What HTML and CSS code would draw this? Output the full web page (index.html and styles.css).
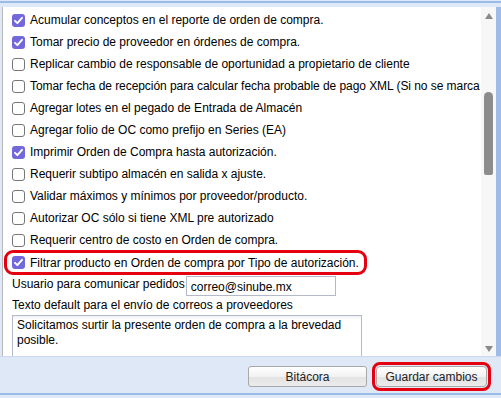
FILE: index.html
```html
<!DOCTYPE html>
<html lang="es">
<head>
<meta charset="utf-8">
<link rel="stylesheet" href="styles.css">
</head>
<body>
<div class="app">
  <div class="top"></div>
  <div class="main">
    <div class="panel">
      <div class="row"><span class="cb on"></span><span class="lbl">Acumular conceptos en el reporte de orden de compra.</span></div>
      <div class="row"><span class="cb on"></span><span class="lbl">Tomar precio de proveedor en órdenes de compra.</span></div>
      <div class="row"><span class="cb"></span><span class="lbl">Replicar cambio de responsable de oportunidad a propietario de cliente</span></div>
      <div class="row"><span class="cb"></span><span class="lbl tight">Tomar fecha de recepción para calcular fecha probable de pago XML (Si no se marca</span></div>
      <div class="row"><span class="cb"></span><span class="lbl">Agregar lotes en el pegado de Entrada de Almacén</span></div>
      <div class="row"><span class="cb"></span><span class="lbl">Agregar folio de OC como prefijo en Series (EA)</span></div>
      <div class="row"><span class="cb on"></span><span class="lbl">Imprimir Orden de Compra hasta autorización.</span></div>
      <div class="row"><span class="cb"></span><span class="lbl">Requerir subtipo almacén en salida x ajuste.</span></div>
      <div class="row"><span class="cb"></span><span class="lbl">Validar máximos y mínimos por proveedor/producto.</span></div>
      <div class="row"><span class="cb"></span><span class="lbl">Autorizar OC sólo si tiene XML pre autorizado</span></div>
      <div class="row"><span class="cb"></span><span class="lbl">Requerir centro de costo en Orden de compra.</span></div>
      <div class="row hl"><span class="cb on"></span><span class="lbl">Filtrar producto en Orden de compra por Tipo de autorización.</span></div>
      <div class="field">
        <span class="flabel">Usuario para comunicar pedidos</span>
        <span class="input">correo@sinube.mx</span>
      </div>
      <div class="tlabel">Texto default para el envío de correos a proveedores</div>
      <div class="textarea">Solicitamos surtir la presente orden de compra a la brevedad posible.</div>
    </div>
    <div class="scroll">
      <span class="arrow up"></span>
      <span class="thumb"></span>
      <span class="arrow down"></span>
    </div>
    <div class="edge"></div>
  </div>
  <div class="footer">
    <button class="btn">Bitácora</button>
    <button class="btn save">Guardar cambios</button>
  </div>
</div>
</body>
</html>
```

FILE: styles.css
```css
* { box-sizing: border-box; }
html, body { margin: 0; padding: 0; }
body {
  width: 501px;
  height: 398px;
  overflow: hidden;
  background: #dfe8f6;
  font-family: "Liberation Sans", Arial, sans-serif;
  font-size: 12px;
  color: #000;
}
.app { display: flex; flex-direction: column; height: 398px; }
.top {
  height: 7px;
  flex: none;
  background: linear-gradient(#dfe8f6 0 1px, #99bbe8 1px 3px, #dfe8f6 3px);
}
.main { display: flex; height: 349px; flex: none; }
.panel {
  margin-left: 2px;
  width: 479px;
  background: #fff;
  border-left: 1px solid #b8b8b8;
  overflow: hidden;
  padding-top: 2px;
}
.row {
  display: flex;
  align-items: center;
  height: 22px;
  padding-left: 9px;
  white-space: nowrap;
}
.lbl { margin-left: 5px; font-size: 12px; }
.lbl.tight { letter-spacing: -0.06px; }
.cb {
  flex: none;
  width: 13px;
  height: 13px;
  border: 1px solid #767676;
  border-radius: 3px;
  background: #fff;
}
.cb.on {
  border: none;
  background: #7268d9 url("data:image/svg+xml;utf8,<svg xmlns='http://www.w3.org/2000/svg' width='13' height='13' viewBox='0 0 13 13'><path d='M3 6.8 L5.4 9.2 L10 3.8' fill='none' stroke='white' stroke-width='1.9' stroke-linecap='round' stroke-linejoin='round'/></svg>") no-repeat center;
}
.row.hl {
  width: fit-content;
  height: 19px;
  margin: 2px 0 1px 4px;
  padding: 0 5px 0 5px;
  outline: 3px solid #e4000f;
  border-radius: 6px;
}
.field {
  display: flex;
  align-items: center;
  margin-top: 4px;
  padding-left: 9px;
  height: 20px;
}
.flabel { font-size: 12px; margin-top: -5px; }
.input {
  margin-left: 1px;
  width: 150px;
  height: 20px;
  border: 1px solid #b5b8c8;
  padding: 3px 4px 0;
  font-size: 12px;
}
.tlabel { padding-left: 9px; margin-top: 1px; height: 18px; line-height: 17px; font-size: 12px; }
.textarea {
  margin-left: 9px;
  width: 350px;
  height: 60px;
  border: 1px solid #b5b8c8;
  background: linear-gradient(#eef0f4, #fff 4px);
  padding: 2px 4px;
  line-height: 15px;
  font-size: 12px;
}
.scroll {
  width: 15px;
  flex: none;
  background: #f7f7f7;
  display: flex;
  flex-direction: column;
  align-items: center;
  padding-top: 6px;
}
.arrow {
  width: 0; height: 0;
  border-left: 4.5px solid transparent;
  border-right: 4.5px solid transparent;
}
.arrow.up { border-bottom: 6px solid #8a8a8a; }
.arrow.down { border-top: 6px solid #8a8a8a; margin-top: 171px; }
.thumb {
  width: 9px;
  height: 83px;
  margin-top: 73px;
  background: #8c8c8c;
  border-radius: 4.5px 4.5px 2px 2px;
}
.edge { flex: 1; background: #9dbde8; }
.footer {
  flex: 1;
  display: flex;
  justify-content: flex-end;
  align-items: flex-start;
  gap: 9px;
  padding: 9px 14px 0 0;
  border-top: 1px solid #c9d8ee;
  border-bottom: 2px solid #99bbe8;
  margin-bottom: 3px;
}
.btn {
  font-family: "Liberation Sans", Arial, sans-serif;
  font-size: 12px;
  color: #222;
  height: 21px;
  width: 119px;
  border: 1px solid #a8a8a8;
  border-radius: 3px;
  background: linear-gradient(#ffffff, #f2f2f2 50%, #e2e2e2 50%, #ececec);
  padding: 0;
}
.btn.save {
  width: 111px;
  outline: 3px solid #e4000f;
  outline-offset: 1px;
  border-radius: 4px;
}
```
